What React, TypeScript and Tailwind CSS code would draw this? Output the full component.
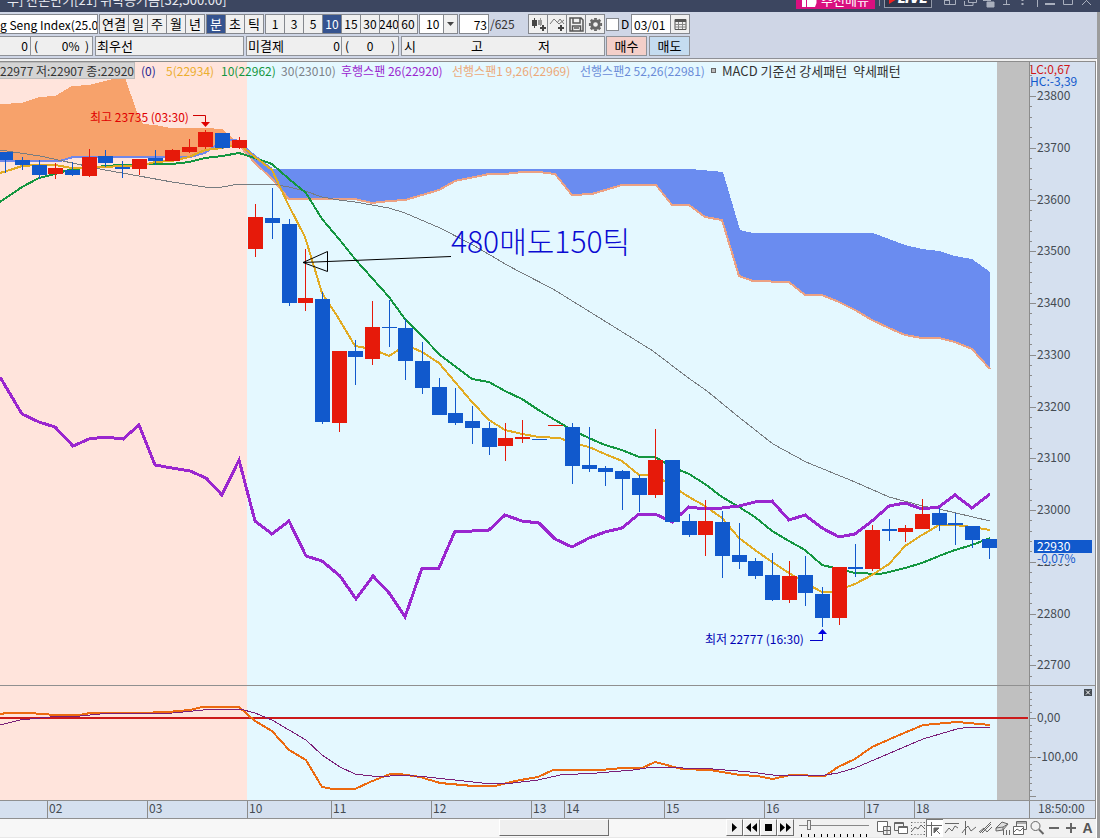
import React from "react";

type Candle = [kind: "u" | "d", high: number, low: number, top: number, bottom: number];

const UP = "#e61a0a";
const DOWN = "#1159cc";

const candles: Candle[] = [
  ["d", 152, 173, 152, 160], ["d", 157, 170, 160, 165], ["d", 160, 179, 165, 175], ["u", 163, 179, 168, 174],
  ["d", 162, 176, 170, 175], ["u", 149, 177, 157, 176], ["d", 150, 167, 156, 163], ["d", 161, 178, 167, 169],
  ["u", 159, 175, 159, 169], ["d", 150, 165, 158, 161], ["u", 149, 161, 150, 161], ["u", 139, 153, 147, 152],
  ["u", 130, 149, 132, 147], ["d", 133, 149, 133, 148], ["u", 137, 149, 140, 148], ["u", 204, 257, 217, 249],
  ["d", 188, 239, 218, 223], ["d", 219, 306, 224, 303], ["u", 249, 311, 298, 303], ["d", 292, 424, 299, 422],
  ["u", 351, 432, 351, 423], ["d", 340, 385, 351, 357], ["u", 301, 365, 327, 359], ["d", 300, 347, 327, 328],
  ["d", 319, 380, 328, 361], ["d", 342, 394, 361, 388], ["d", 378, 415, 387, 415], ["d", 388, 425, 413, 423],
  ["d", 406, 444, 421, 428], ["d", 422, 455, 428, 447], ["u", 423, 461, 438, 446], ["u", 420, 443, 437, 439],
  ["d", 439, 440, 439, 440], ["u", 425, 426, 425, 426], ["d", 423, 484, 427, 466], ["d", 427, 472, 465, 469],
  ["d", 466, 486, 468, 472], ["d", 470, 510, 471, 479], ["d", 475, 512, 478, 495], ["u", 429, 498, 460, 495],
  ["d", 460, 522, 460, 522], ["d", 514, 537, 521, 535], ["u", 500, 556, 521, 535], ["d", 511, 578, 522, 556],
  ["d", 523, 569, 555, 562], ["d", 558, 579, 561, 576], ["d", 553, 601, 575, 600], ["u", 561, 603, 576, 600],
  ["d", 556, 606, 575, 593], ["d", 587, 627, 594, 618], ["u", 567, 625, 567, 618], ["d", 544, 577, 567, 569],
  ["u", 525, 571, 530, 569], ["d", 519, 541, 529, 531], ["u", 525, 542, 528, 532], ["u", 499, 529, 514, 529],
  ["d", 508, 531, 513, 525], ["d", 513, 545, 523, 525], ["d", 526, 548, 526, 540], ["d", 539, 559, 539, 548],
];

const candleX = (i: number) => Math.round(5.33 + 16.667 * i);

const ma5 =
  "0,173 10,170 22,166 39,165 55,165 72,168 89,168 105,167 122,166 139,166 155,162 172,161 189,157 205,150 222,148 239,144 255,157 272,170 289,206 305,237 322,293 339,319 355,346 372,349 389,356 405,346 413,348 422,352 439,363 455,382 472,402 489,420 505,430 522,434 539,437 560,438 572,443 589,447 605,454 622,461 639,475 655,475 672,486 689,497 705,506 722,518 739,538 755,550 772,562 789,573 805,583 822,592 832,592 839,590 855,584 872,575 889,564 905,546 922,535 939,525 955,525 972,527 990,530";
const ma10 =
  "0,202 22,187 39,178 55,174 72,169 89,168 105,166 122,165 139,165 155,164 172,164 189,162 205,158 222,156 239,153 255,158 272,164 289,179 306,193 322,219 339,239 355,259 372,278 389,297 405,319 422,336 440,355 456,367 472,379 489,382 505,391 522,399 540,411 555,420 572,430 589,438 605,445 622,450 639,457 655,457 672,467 689,474 705,484 722,497 739,507 755,517 772,531 789,541 805,550 822,565 839,569 855,573 880,574 889,572 905,568 922,563 939,556 955,550 972,545 990,538";
const ma30 =
  "0,150 40,156 72,163 105,170 139,176 172,182 205,187 222,187 239,184 272,184 289,187 305,191 322,197 339,200 355,202 389,208 405,213 440,228 473,245 507,265 520,272 553,289 603,320 653,351 687,377 707,391 740,418 773,444 806,462 855,482 889,497 923,506 939,509 973,517 990,521";
const lagging =
  "0,377 22,414 39,422 55,427 73,446 89,439 105,437 123,439 139,425 155,465 172,468 190,471 206,478 222,495 239,460 255,521 272,534 289,521 306,556 322,561 340,576 356,599 373,576 390,594 405,617 422,568 439,568 455,531 472,531 489,530 505,515 522,521 539,523 555,539 572,547 589,538 605,532 622,528 639,514 655,514 672,522 689,507 705,509 722,508 739,506 755,502 772,501 789,520 805,515 822,528 839,537 855,534 872,521 889,506 905,503 922,509 939,507 955,495 972,508 990,494";
const bullCloud =
  "0,104 22,103 39,97 55,96 72,86 89,85 105,81 118,78 125,78 137,112 143,124 155,125 170,128 205,128 222,129 240,144 220,146 205,153 190,157 73,157 60,161 0,161";
const spanB =
  "0,161 60,161 73,157 190,157 205,153 222,141 236,140 255,156 272,169";
const spanBAfter = "255,156 272,169 690,169 723,172 740,230 753,233 873,233 905,245 922,249 939,251 955,256 972,259 990,272";
const spanAForward =
  "239,145 255,163 272,179 289,199 355,199 372,203 389,201 405,200 439,190 455,181 489,174 505,174 522,172 539,172 555,174 572,195 592,194 622,185 656,185 672,205 689,205 705,217 722,220 739,276 753,281 789,282 805,295 822,295 839,302 855,310 872,320 889,328 905,335 922,338 939,338 955,342 972,349 990,369";
const bearCloud = spanBAfter + " " + spanAForward.split(" ").reverse().join(" ");

const macdLine =
  "0,714 7,713 30,713 55,715 80,715 90,713 140,713 167,712 190,710 202,707 239,707 255,721 272,731 289,750 306,760 322,787 333,789 355,789 370,782 390,774 400,774 420,777 440,783 473,786 495,786 515,781 538,777 553,770 600,770 623,768 642,768 655,762 682,769 710,770 740,775 757,776 773,779 790,775 825,776 838,767 855,759 872,747 897,736 923,725 957,722 990,725";
const signalLine =
  "0,725 20,720 50,717 80,716 100,714 173,713 203,710 227,709 240,709 255,713 272,720 289,730 306,740 322,755 340,767 355,774 380,777 400,775 427,777 482,783 513,783 538,780 560,775 597,773 633,770 653,767 713,769 750,772 773,775 825,775 838,773 855,768 923,739 957,729 970,727 990,727";

const priceLabels = [23800, 23700, 23600, 23500, 23400, 23300, 23200, 23100, 23000, 22900, 22800, 22700];
const priceY = (p: number) => Math.round(96 + (23800 - p) * 0.5175);
const minorPrices = Array.from({ length: 60 }, (_, i) => 23860 - i * 20);
const hours: [string, number][] = [
  ["02", 47], ["03", 147], ["10", 247], ["11", 331], ["12", 431], ["13", 531],
  ["14", 564], ["15", 664], ["16", 764], ["17", 864], ["18", 914],
];

function Backdrop({ y, h }: { y: number; h: number }) {
  return (
    <>
      <rect x={0} y={y} width={247} height={h} fill="#ffe4dc" />
      <rect x={247} y={y} width={750} height={h} fill="#e4f8ff" />
      <rect x={997} y={y} width={32} height={h} fill="#c0c0c0" />
      <rect x={1029} y={y} width={66} height={h} fill="#d5e0ef" />
      <rect x={1029} y={y} width={1} height={h} fill="#8c8c8c" />
    </>
  );
}

function PricePane() {
  return (
    <svg viewBox="0 62 1095 623" className="block h-auto w-full text-[12px]" role="img" aria-label="가격 차트">
      <Backdrop y={62} h={623} />
      <g shapeRendering="crispEdges" fill="none">
        <polygon points={bullCloud} fill="#f7a26b" />
        <polygon points={bearCloud} fill="#6a8cf0" />
        <polyline points={spanB} stroke="#7088ea" strokeWidth={2} />
        <polyline points={spanAForward} stroke="#eca183" strokeWidth={2} />
        <polyline points={ma30} stroke="#777c80" strokeWidth={1} />
        <polyline points={ma10} stroke="#149640" strokeWidth={2} />
        <polyline points={ma5} stroke="#e2ab22" strokeWidth={2} />
        <polyline points={lagging} stroke="#9a26cf" strokeWidth={3} />
        {candles.map(([kind, high, low, top, bottom], i) => {
          const x = candleX(i);
          const color = kind === "u" ? UP : DOWN;
          return (
            <g key={i} fill={color}>
              <rect x={x} y={high} width={1} height={low - high} />
              <rect x={x - 7} y={top} width={15} height={bottom - top} />
            </g>
          );
        })}
      </g>
      <text x={90} y={122} fill="#e00000">최고 23735 (03:30)</text>
      <path d="M193 115.500H205.500V122" stroke="#d00000" fill="none" />
      <path d="M201 122H210L205.500 127Z" fill="#e00000" />
      <text x={705} y={644} fill="#0000b4">최저 22777 (16:30)</text>
      <path d="M810 640.500H822.500V633" stroke="#0000c8" fill="none" />
      <path d="M818 634H827L822.500 629Z" fill="#0000e0" />
      <text x={451} y={253} fill="#0a0ad2" className="text-[30px] font-light">480매도150틱</text>
      <path d="M303 262.500L451 256.500M303 262.500L327.500 251.500V271.500Z" stroke="#000" fill="none" />
      <g fill="#8c8c8c">
        {minorPrices.map((p) => (
          <rect key={p} x={1030} y={priceY(p)} width={p % 100 === 0 ? 6 : 2} height={1} />
        ))}
      </g>
      <g fill="#444b52">
        {priceLabels.map((p) => (
          <text key={p} x={1037} y={priceY(p) + 4}>{p}</text>
        ))}
      </g>
      <text x={1030} y={74} fill="#d01818">LC:0,67</text>
      <text x={1030} y={86} fill="#1159cc">HC:-3,39</text>
      <rect x={1037} y={553} width={42} height={11} fill="#d5e0ef" />
      <rect x={1034} y={540} width={58} height={13} fill="#1159cc" />
      <text x={1037} y={551} fill="#fff">22930</text>
      <text x={1037} y={563} fill="#1159cc">-0,07%</text>
    </svg>
  );
}

function MacdPane() {
  return (
    <svg viewBox="0 685 1095 115" className="block h-auto w-full text-[12px]" role="img" aria-label="MACD">
      <Backdrop y={685} h={115} />
      <rect x={0} y={685} width={1095} height={1} fill="#909090" />
      <g shapeRendering="crispEdges" fill="none">
        <rect x={0} y={717} width={1028} height={2} fill="#cc1a1a" />
        <polyline points={macdLine} stroke="#ec6a10" strokeWidth={2} />
        <polyline points={signalLine} stroke="#7a1f78" strokeWidth={1} />
      </g>
      <g fill="#8c8c8c">
        {Array.from({ length: 17 }, (_, i) => (
          <rect key={i} x={1030} y={Math.round(692 + i * 6.5)} width={i === 4 || i === 10 || i === 16 ? 6 : 2} height={1} />
        ))}
      </g>
      <g fill="#444b52">
        <text x={1037} y={722}>0,00</text>
        <text x={1037} y={761}>-100,00</text>
      </g>
      <rect x={1084} y={689} width={8} height={7} fill="#444b52" />
      <path d="M1086 690.500L1090 694.500M1090 690.500L1086 694.500" stroke="#fff" />
    </svg>
  );
}

function TimeAxis() {
  return (
    <svg viewBox="0 800 1095 19" className="block h-auto w-full text-[12px]" role="img" aria-label="시간">
      <rect x={0} y={800} width={1095} height={19} fill="#d5e0ef" />
      <rect x={0} y={800} width={1095} height={1} fill="#909090" />
      <rect x={0} y={818} width={1095} height={1} fill="#909090" />
      <rect x={1029} y={801} width={1} height={17} fill="#8c8c8c" />
      {hours.map(([label, x]) => (
        <g key={label}>
          <rect x={x} y={801} width={1} height={17} fill="#8c8c8c" />
          <text x={x + 2} y={813} fill="#444b52">{label}</text>
        </g>
      ))}
      <text x={1038} y={813} fill="#444b52">18:50:00</text>
    </svg>
  );
}

const periodButton = "flex h-5 shrink-0 items-center justify-center overflow-hidden border-y border-r border-[#85888e]";

function Segments({ items, active, first }: { items: string[]; active?: string; first?: string }) {
  return (
    <div className="flex border-l border-[#85888e]">
      {items.map((t) => (
        <button
          key={t}
          className={`${periodButton} ${t === first ? "w-[29px]" : "w-[19px]"} ${/\d/.test(t) ? "text-[12px]" : "text-[13px]"} ${t === active ? "bg-[#35538f] text-white" : "bg-[#f0f0f0]"}`}
        >
          {t}
        </button>
      ))}
    </div>
  );
}

function ToolIcons() {
  const cls = `${periodButton} w-[19px] bg-[#f0f0f0]`;
  return (
    <div className="flex border-l border-[#85888e]">
      <button className={cls} aria-label="차트 유형">
        <svg width="17" height="17" viewBox="0 0 17 17" fill="#444">
          <path d="M2 4h5v6H2zM4 2h1v10H4z" />
          <path d="M8 4h4v5H8zM10 2h1v8h-1z" fill="#999" />
          <path d="M12 9h2v2h2v2h-2v2h-2v-2h-2v-2h2z" />
        </svg>
      </button>
      <button className={cls} aria-label="지표 추가">
        <svg width="17" height="17" viewBox="0 0 17 17" fill="none" stroke="#777">
          <path d="M1 8L5 3L8 6L10 8L15 4M8 7L11 3L15 8" />
          <path d="M11 9h2v2h2v2h-2v2h-2v-2H9v-2h2z" fill="#444" stroke="none" />
        </svg>
      </button>
      <button className={cls} aria-label="저장">
        <svg width="17" height="17" viewBox="0 0 17 17" fill="none" stroke="#555" strokeWidth="1.500">
          <path d="M2 2H13L15 4V15H2ZM5 2V7H12V2M4.500 15V10H12.500V15M6 12H11" />
        </svg>
      </button>
      <button className={cls} aria-label="설정">
        <svg width="15" height="15" viewBox="0 0 16 16" fill="none" stroke="#666">
          <circle cx="8" cy="8" r="4" strokeWidth="3" />
          <path d="M8 1V3M8 13V15M1 8H3M13 8H15M3 3L4.500 4.500M11.500 11.500L13 13M13 3L11.500 4.500M4.500 11.500L3 13" strokeWidth="3" />
        </svg>
      </button>
    </div>
  );
}

function TitleBar() {
  return (
    <header className="flex h-3 items-end overflow-hidden bg-[#3c4660] text-white">
      <div className="mb-1 ml-[7px] shrink-0 text-[13px] leading-4 text-[#e8eaf0]">부] 잔존만기[21] 위탁증거금[32,500.00]</div>
      <div className="ml-auto flex shrink-0 items-end">
        <button className="mb-[3px] flex h-5 w-[79px] items-center gap-1 bg-[#d9107f] pt-px pl-1.5 leading-4">
          <svg width="15" height="14" viewBox="0 0 15 14" fill="#fff">
            <path d="M0 5h4v9H0zM5 5L8 0h2v4h4.500v6L13 14H5z" />
          </svg>
          추천메뉴
        </button>
        <span className="mb-1.5 ml-1 h-5 w-px bg-[#8b92a3]" />
        <button className="mb-1 ml-1 flex h-5 w-12 items-end gap-px border border-[#9298a8] bg-[#2f374c] pb-[3px] pl-1 font-['Inter',sans-serif] text-[13px] leading-3 font-black italic">
          <svg width="8" height="9" viewBox="0 0 8 9"><path d="M0 0L8 4L0 9Z" fill="#e22" /></svg>
          LIVE
        </button>
        <svg width="160" height="16" viewBox="0 0 160 16" className="mb-px ml-2 shrink-0" fill="none" stroke="#a9afbd">
          <path d="M4.500 1V9.500H15.500V1M4 5.500H10M9.500 1V9M10 3.500H15" />
          <path d="M24.500 6V10.500H33V8M28.500 1V7.500H36.500V1M28 3.500H34" />
          <path d="M43 5.500H51M47 7H54V12H47Z" fill="#a9afbd" />
          <path d="M66.500 1V9M63 9.500H70" />
          <path d="M82.500 1V6M82.500 8V10" strokeWidth="2" />
          <path d="M97.500 1V12" />
          <path d="M105 9H115" strokeWidth="2" />
          <path d="M123.500 1V9.500H132.500V1" />
          <path d="M142 10L151 1M151 10L142 1" />
        </svg>
      </div>
    </header>
  );
}

const cell = "flex h-5 shrink-0 items-center border-y border-r border-[#8f9298] bg-[#efefef] whitespace-pre";

function Toolbar() {
  return (
    <div className="flex flex-col gap-0.5 border-b border-[#8e9096] bg-[#cfd6e6] py-0.5">
      <div className="flex h-5 items-center gap-px text-[12px]">
        <input
          aria-label="종목"
          defaultValue="g Seng Index(25.0"
          className="h-5 w-[98px] shrink-0 border-y border-r border-[#85888e] bg-white outline-none"
        />
        <Segments items={["연결", "일", "주", "월", "년"]} first="연결" />
        <Segments items={["분", "초", "틱"]} active="분" />
        <Segments items={["1", "3", "5", "10", "15", "30", "240", "60"]} active="10" />
        <div className="relative h-5 w-[39px] shrink-0">
          <select aria-label="주기" className="h-5 w-full appearance-none border border-[#85888e] bg-white pl-1.5 outline-none">
            <option>10</option>
          </select>
          <span className="pointer-events-none absolute top-px right-px flex h-[18px] w-3.5 items-center justify-center border-l border-[#85888e] bg-[#f0f0f0]">
            <svg width="7" height="4" viewBox="0 0 7 4"><path d="M0 0H7L3.500 4Z" fill="#444" /></svg>
          </span>
        </div>
        <input aria-label="봉 개수" defaultValue="73" className="h-5 w-[30px] shrink-0 border border-[#85888e] bg-white pr-px text-right outline-none" />
        <span className="w-[37px] shrink-0 text-[#333]">/625</span>
        <ToolIcons />
        <label className="flex w-6 shrink-0 items-center gap-0.5">
          <input type="checkbox" className="h-[13px] w-[13px] shrink-0 appearance-none border border-[#85888e] bg-white" />
          D
        </label>
        <input aria-label="날짜" defaultValue="03/01" className="h-5 w-10 shrink-0 border border-r-0 border-[#85888e] bg-white pl-0.5 outline-none" />
        <button aria-label="달력" className="-ml-0.5 flex h-5 w-5 shrink-0 items-center justify-center border border-[#85888e] bg-[#f0f0f0]">
          <svg width="13" height="12" viewBox="0 0 13 12" fill="none" stroke="#555">
            <path d="M1 1.500H12V11.500H1Z" />
            <path d="M1 3H12" strokeWidth="2" />
            <path d="M1 6.500H12M1 9H12M4.500 4V11M8.500 4V11" stroke="#888" />
          </svg>
        </button>
      </div>
      <div className="flex h-5">
        <output className={`${cell} w-[31px] justify-end pr-0.5 text-[12px]`}>0</output>
        <output className={`${cell} w-[62px] justify-between px-[3px] text-[12px]`}><span>(</span><span>0%  )</span></output>
        <output className={`${cell} ml-0.5 w-[149px] border-l pl-px`}>최우선</output>
        <output className={`${cell} ml-0.5 w-24 justify-between border-l px-px`}><span>미결제</span><span className="text-[12px]">0</span></output>
        <output className={`${cell} w-[57px] justify-between px-[3px] text-[12px]`}><span>(</span><span>0</span><span>)</span></output>
        <output className={`${cell} ml-0.5 w-[204px] border-l pl-0.5`}>
          <span className="w-[67px]">시</span><span className="w-[67px]">고</span><span>저</span>
        </output>
        <button className="ml-px h-5 w-[41px] shrink-0 border border-[#8f9298] bg-[#f4cfc9]">매수</button>
        <button className="ml-0.5 h-5 w-[41px] shrink-0 border border-[#8f9298] bg-[#c5dcf0]">매도</button>
      </div>
    </div>
  );
}

function Legend() {
  return (
    <div className="absolute top-0 left-0 flex h-[17px] items-center text-[12px] leading-4 whitespace-nowrap">
      <span className="h-[17px] border border-l-0 border-[#bcbcbc] bg-[#d4d4d4] text-[#333]">22977 저:22907 종:22920</span>
      <span className="ml-1.5 w-[25px] text-[#1c1c90]">(0)</span>
      <span className="w-[55px] text-[#ecae2e]">5(22934)</span>
      <span className="w-[60px] text-[#149640]">10(22962)</span>
      <span className="w-[60px] text-[#7c8288]">30(23010)</span>
      <span className="w-[111px] text-[#9a26cf]">후행스팬 26(22920)</span>
      <span className="w-32 text-[#eca878]">선행스팬1 9,26(22969)</span>
      <span className="w-[131px] text-[#6a8cd8]">선행스팬2 52,26(22981)</span>
      <span className="mr-1.5 h-[5px] w-[5px] border border-[#666] bg-[#bbb]" />
      <span className="text-[13px] whitespace-pre text-[#333]">MACD 기준선 강세패턴  약세패턴</span>
    </div>
  );
}

const playback: [string, string][] = [
  ["재생", "M5 3L10 7.500L5 12Z"],
  ["뒤로", "M7 3V12L2 7.500ZM13 3V12L8 7.500Z"],
  ["정지", "M4 4H11V11H4Z"],
  ["앞으로", "M2 3V12L7 7.500ZM8 3V12L13 7.500Z"],
];

const drawTools: [string, React.ReactNode][] = [
  ["창 추가", <><path d="M1.500 1.500H11.500V11.500H1.500Z" fill="#fff" /><path d="M7.500 6.500H14.500V14.500H7.500ZM11 6.500V14.500M7.500 10.500H14.500" fill="#eee" /></>],
  ["창 겹침", <><path d="M1.500 2.500H10.500V10.500H1.500ZM1.500 3.500H10.500" /><path d="M5.500 6.500H14.500V13.500H5.500ZM5.500 7.500H14.500" fill="#fff" /></>],
  ["영역", <><path d="M1.500 2.500H14.500M1.500 14.500H14.500M1.500 2V15M14.500 2V15" strokeDasharray="1 2" /><path d="M2 11L5 7L8 9L11 5L14 8" /></>],
  ["십자선", <><path d="M4.500 1V15M0 4.500H15" /><path d="M7 7H12L7 12ZM8 8L13 13" fill="#666" /></>],
  ["수평선", <><path d="M1 3.500H15" /><path d="M1 13L5 8L8 11L11 6L14 8" /></>],
  ["수직선", <><path d="M4.500 1V15M1 13L4 9L7 6L10 11L15 7" /></>],
  ["추세선", <><path d="M2 13L13 2M1 12L6 8L9 12L14 7" /><path d="M4 13L13 4" /></>],
  ["지우개", <><path d="M1 8L7 2L13 4L8 10L1 11ZM1 8L8 7L13 4M8 7V10" fill="#ddd" /><path d="M8.500 10V15M11.500 10V15M14.500 10V15" /></>],
  ["차트 복사", <><path d="M4.500 1.500H14.500V9.500H4.500ZM4.500 3H14.500" /><path d="M1.500 6.500H11.500V14.500H1.500Z" fill="#fff" /><path d="M2 12L5 9L8 11L11 8" /></>],
  ["확대경", <><circle cx="6.500" cy="6" r="4.500" /><path d="M10 9.500L14.500 14" strokeWidth="2" /></>],
  ["축소", <path d="M3 8H13" strokeWidth="2" />],
  ["확대", <path d="M3 8H13M8 3V13" strokeWidth="2" />],
];

function BottomBar() {
  return (
    <div className="flex h-[18px] bg-[#f1f1f1]">
      <div className="flex min-w-0 flex-1 bg-[#f7f7f7] pb-px">
        <div className="flex-[500]" />
        <div className="flex-[109] border border-t-white border-r-[#6e6e6e] border-b-[#6e6e6e] border-l-white bg-[#efefef]" />
        <div className="flex-[117]" />
      </div>
      {playback.map(([label, d]) => (
        <button key={label} aria-label={label} className="mb-px flex w-[17px] items-center justify-center border border-t-white border-r-[#6e6e6e] border-b-[#6e6e6e] border-l-white bg-[#f0f0f0]">
          <svg width="15" height="15" viewBox="0 0 15 15" fill="#000"><path d={d} /></svg>
        </button>
      ))}
      <div className="ml-[5px] flex w-[70px] flex-col justify-between">
        <input
          type="range"
          aria-label="속도"
          defaultValue={12}
          className="mt-px h-[10px] w-full appearance-none bg-[linear-gradient(#888,#888)] bg-[length:100%_1px] bg-center bg-no-repeat [&::-webkit-slider-thumb]:h-[10px] [&::-webkit-slider-thumb]:w-[4px] [&::-webkit-slider-thumb]:appearance-none [&::-webkit-slider-thumb]:border [&::-webkit-slider-thumb]:border-[#777] [&::-webkit-slider-thumb]:bg-[#eee]"
        />
        <div className="mx-0.5 flex justify-between">
          {Array.from({ length: 11 }, (_, i) => <span key={i} className="h-[3px] w-px bg-black" />)}
        </div>
      </div>
      <div className="ml-[6px] flex">
        {drawTools.map(([label, art]) => (
          <button key={label} aria-label={label} className={`flex w-[17px] items-center justify-center ${label === "십자선" ? "border-t border-l border-[#777] bg-white" : ""}`}>
            <svg width="16" height="16" viewBox="0 0 16 16" fill="none" stroke="#666">{art}</svg>
          </button>
        ))}
        <button className="w-[17px] font-['Liberation_Sans',sans-serif] text-[14px] leading-4 font-bold text-[#555]">A</button>
      </div>
    </div>
  );
}

export default function App() {
  return (
    <div className="bg-white pb-px font-['Noto_Sans_CJK_KR',sans-serif] text-[13px] leading-4 text-black">
      <TitleBar />
      <div className="flex">
        <main className="min-w-0 flex-1">
          <Toolbar />
          <div className="mr-px border-b border-[#e8e8e8]">
            <div className="border-t-2 border-[#f0f0f0]">
              <div className="relative border-t border-r border-[#8c8c8c]">
                <PricePane />
                <Legend />
                <MacdPane />
                <TimeAxis />
              </div>
            </div>
            <BottomBar />
          </div>
        </main>
        <div className="w-[3px] bg-[#9c9c9c]" />
      </div>
    </div>
  );
}
